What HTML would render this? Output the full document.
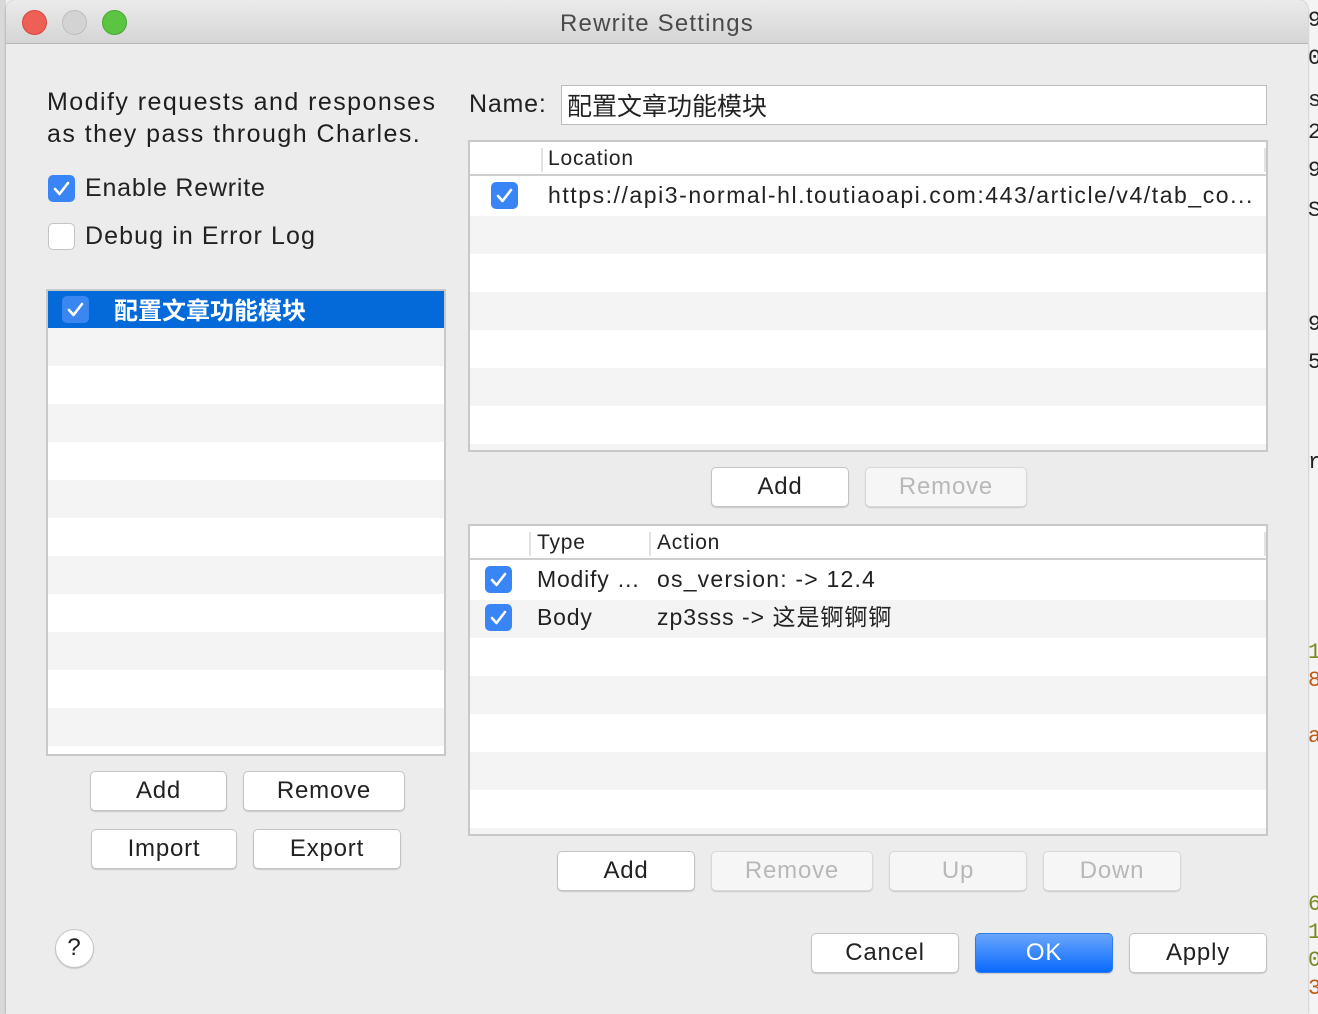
<!DOCTYPE html>
<html><head><meta charset="utf-8"><style>
*{margin:0;padding:0;box-sizing:border-box}
body{width:1318px;height:1014px;overflow:hidden;background:#f4f4f4;font-family:"Liberation Sans","Noto Sans CJK SC",sans-serif;color:#222;position:relative;letter-spacing:0.8px}
.a{position:absolute}
.win{left:6px;top:0;width:1302px;height:1014px;background:#ececec;border-radius:10px 10px 0 0;box-shadow:0 0 2px rgba(0,0,0,.35)}
.tb{left:6px;top:0;width:1302px;height:44px;background:linear-gradient(#ebebeb,#d5d5d5);border-bottom:1px solid #b8b8b8;border-radius:10px 10px 0 0}
.dot{width:25px;height:25px;border-radius:50%;top:10px}
.btn{background:#fff;border:1px solid #c4c4c4;border-radius:5px;box-shadow:0 1px 1px rgba(0,0,0,.15);font-size:24px;text-align:center;line-height:37px;height:40px}
.dis{background:#f6f6f6;color:#b8b8b8;border-color:#d8d8d8}
.cb{width:27px;height:27px;border-radius:5px;background:#3a85f5;}
.cb svg{position:absolute;left:4px;top:4px}
.tbl{background:#fff;border:2px solid #c8c8c8;overflow:hidden}
.row{position:absolute;left:0;right:0;height:38px}
.g{background:#f4f4f4}
.cjk{letter-spacing:0}
.bg{font-family:"Liberation Mono",monospace;font-size:22px;left:1308px;color:#222;letter-spacing:0}
</style></head><body>
<div class="a" style="left:0;top:0;width:6px;height:1014px;background:#d9d9d9"></div>
<div class="a bg" style="top:8px">9</div><div class="a bg" style="top:46px">0</div><div class="a bg" style="top:88px">s</div><div class="a bg" style="top:120px">2</div><div class="a bg" style="top:158px">9</div><div class="a bg" style="top:198px">S</div><div class="a bg" style="top:312px">9</div><div class="a bg" style="top:350px">5</div><div class="a bg" style="top:450px">r</div>
<div class="a bg" style="top:640px;color:#7a8a20">1</div><div class="a bg" style="top:668px;color:#c05a10">8</div><div class="a bg" style="top:724px;color:#c05a10">a</div><div class="a bg" style="top:892px;color:#7a8a20">6</div><div class="a bg" style="top:920px;color:#7a8a20">1</div><div class="a bg" style="top:948px;color:#7a8a20">0</div><div class="a bg" style="top:976px;color:#c05a10">3</div>

<div class="a win"></div>
<div class="a tb"></div>
<div class="a dot" style="left:22px;background:#ee5f55;border:1px solid #d7463d"></div>
<div class="a dot" style="left:62px;background:#d3d3d3;border:1px solid #bdbdbd"></div>
<div class="a dot" style="left:102px;background:#5bc542;border:1px solid #45a82e"></div>
<div class="a" style="left:0;width:1314px;top:10px;text-align:center;font-size:24px;color:#4a4a4a;letter-spacing:1.2px">Rewrite Settings</div>

<div class="a" style="left:47px;top:86px;font-size:25px;line-height:32px;color:#1e1e1e;letter-spacing:1.45px">Modify requests and responses<br>as they pass through Charles.</div>
<div class="a cb" style="left:48px;top:175px"><svg width="19" height="19" viewBox="0 0 19 19"><path d="M3 10l4.5 5L16 4" fill="none" stroke="#fff" stroke-width="2.6" stroke-linecap="round" stroke-linejoin="round"/></svg></div>
<div class="a" style="left:85px;top:174px;font-size:25px">Enable Rewrite</div>
<div class="a" style="left:48px;top:223px;width:27px;height:27px;border-radius:5px;background:#fff;border:1px solid #c4c4c4"></div>
<div class="a" style="left:85px;top:222px;font-size:25px;letter-spacing:1.1px">Debug in Error Log</div>

<div class="a tbl" style="left:46px;top:289px;width:400px;height:467px">
<div class="row" style="top:0;background:#0469d9"></div>
<div class="row g" style="top:37px"></div><div class="row g" style="top:113px"></div><div class="row g" style="top:189px"></div><div class="row g" style="top:265px"></div><div class="row g" style="top:341px"></div><div class="row g" style="top:417px"></div>
<div class="a cb" style="left:14px;top:5px;background:#3b87f2"><svg width="19" height="19" viewBox="0 0 19 19"><path d="M3 10l4.5 5L16 4" fill="none" stroke="#fff" stroke-width="2.6" stroke-linecap="round" stroke-linejoin="round"/></svg></div>
<div class="a cjk" style="left:66px;top:0px;font-size:24px;color:#fff;font-weight:bold">配置文章功能模块</div>
</div>

<div class="a btn" style="left:90px;top:771px;width:137px">Add</div>
<div class="a btn" style="left:243px;top:771px;width:162px">Remove</div>
<div class="a btn" style="left:91px;top:829px;width:146px">Import</div>
<div class="a btn" style="left:253px;top:829px;width:148px">Export</div>
<div class="a btn" style="left:55px;top:929px;width:39px;height:39px;border-radius:50%;line-height:36px;font-size:24px">?</div>

<div class="a" style="left:469px;top:90px;font-size:25px">Name:</div>
<div class="a cjk" style="left:561px;top:85px;width:706px;height:40px;background:#fff;border:1px solid #bcbcbc;font-size:25px;padding:1px 0 0 5px">配置文章功能模块</div>

<div class="a tbl" style="left:468px;top:140px;width:800px;height:312px">
<div class="row" style="top:0;height:34px;border-bottom:2px solid #cfcfcf"></div>
<div class="a" style="left:71px;top:6px;width:2px;height:24px;background:#e2e2e2"></div>
<div class="a" style="left:794px;top:6px;width:2px;height:24px;background:#e2e2e2"></div>
<div class="a" style="left:78px;top:5px;font-size:21px">Location</div>
<div class="row g" style="top:74px"></div><div class="row g" style="top:150px"></div><div class="row g" style="top:226px"></div><div class="row g" style="top:302px"></div>
<div class="a cb" style="left:21px;top:40px"><svg width="19" height="19" viewBox="0 0 19 19"><path d="M3 10l4.5 5L16 4" fill="none" stroke="#fff" stroke-width="2.6" stroke-linecap="round" stroke-linejoin="round"/></svg></div>
<div class="a" style="left:78px;top:40px;font-size:23px;white-space:nowrap;width:712px;overflow:hidden;letter-spacing:1.55px">https://api3-normal-hl.toutiaoapi.com:443/article/v4/tab_co...</div>
</div>

<div class="a btn" style="left:711px;top:467px;width:138px">Add</div>
<div class="a btn dis" style="left:865px;top:467px;width:162px">Remove</div>

<div class="a tbl" style="left:468px;top:524px;width:800px;height:312px">
<div class="row" style="top:0;height:34px;border-bottom:2px solid #cfcfcf"></div>
<div class="a" style="left:59px;top:6px;width:2px;height:24px;background:#e2e2e2"></div>
<div class="a" style="left:179px;top:6px;width:2px;height:24px;background:#e2e2e2"></div>
<div class="a" style="left:794px;top:6px;width:2px;height:24px;background:#e2e2e2"></div>
<div class="a" style="left:67px;top:5px;font-size:21px">Type</div>
<div class="a" style="left:187px;top:5px;font-size:21px">Action</div>
<div class="row g" style="top:74px"></div><div class="row g" style="top:150px"></div><div class="row g" style="top:226px"></div><div class="row g" style="top:302px"></div>
<div class="a cb" style="left:15px;top:40px"><svg width="19" height="19" viewBox="0 0 19 19"><path d="M3 10l4.5 5L16 4" fill="none" stroke="#fff" stroke-width="2.6" stroke-linecap="round" stroke-linejoin="round"/></svg></div>
<div class="a cb" style="left:15px;top:78px"><svg width="19" height="19" viewBox="0 0 19 19"><path d="M3 10l4.5 5L16 4" fill="none" stroke="#fff" stroke-width="2.6" stroke-linecap="round" stroke-linejoin="round"/></svg></div>
<div class="a" style="left:67px;top:40px;font-size:23px">Modify …</div>
<div class="a" style="left:187px;top:40px;font-size:23px;letter-spacing:1.2px">os_version: -&gt; 12.4</div>
<div class="a" style="left:67px;top:78px;font-size:23px">Body</div>
<div class="a" style="left:187px;top:76px;font-size:23px;line-height:30px;letter-spacing:1px">zp3sss -&gt; 这是锕锕锕</div>
</div>

<div class="a btn" style="left:557px;top:851px;width:138px">Add</div>
<div class="a btn dis" style="left:711px;top:851px;width:162px">Remove</div>
<div class="a btn dis" style="left:889px;top:851px;width:138px">Up</div>
<div class="a btn dis" style="left:1043px;top:851px;width:138px">Down</div>

<div class="a btn" style="left:811px;top:933px;width:148px">Cancel</div>
<div class="a btn" style="left:975px;top:933px;width:138px;background:linear-gradient(#69a6fb,#0a6afd);border-color:#2a7cf0;color:#fff">OK</div>
<div class="a btn" style="left:1129px;top:933px;width:138px">Apply</div>
</body></html>
